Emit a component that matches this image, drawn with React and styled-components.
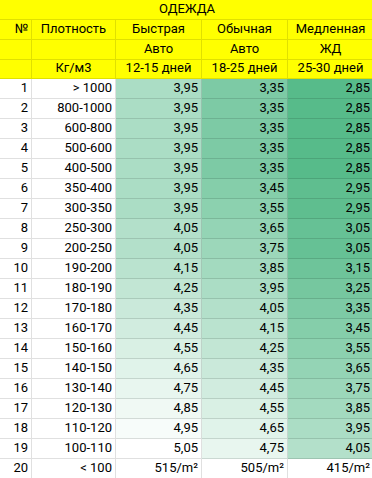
import React from "react";
import styled, { createGlobalStyle } from "styled-components";

const Global = createGlobalStyle`
  html, body { margin: 0; padding: 0; background: #fff; }
  body { font-family: Roboto, "Liberation Sans", Arial, sans-serif; }
  * { box-sizing: border-box; }
`;

const Sheet = styled.div`
  display: grid;
  grid-template-columns: 32px 84px 86px 86px 86px;
  width: 372px;
  overflow: hidden;
  font-size: 13px;
  color: #000;
`;

const MIN = 2.85;
const MAX = 5.05;
const scale = (v) => {
  if (v == null) return "#ffffff";
  const t = Math.max(0, Math.min(1, (v - MIN) / (MAX - MIN)));
  const mix = (a) => Math.round(a + (255 - a) * t);
  return `rgb(${mix(87)}, ${mix(187)}, ${mix(138)})`;
};

const Cell = styled.div`
  height: ${(p) => p.$h || 20}px;
  border-right: 1px solid rgba(0, 0, 0, 0.12);
  border-bottom: 1px solid rgba(0, 0, 0, 0.12);
  background: ${(p) => (p.$head ? "#ffff00" : scale(p.$value))};
  display: flex;
  align-items: flex-end;
  justify-content: ${(p) => (p.$center ? "center" : "flex-end")};
  padding: 0 3px 3px 3px;
  line-height: 15px;
  white-space: nowrap;
`;

const Title = styled(Cell)`
  grid-column: 1 / -1;
  border-right: none;
`;

const rows = [
  [1, "> 1000", 3.95, 3.35, 2.85],
  [2, "800-1000", 3.95, 3.35, 2.85],
  [3, "600-800", 3.95, 3.35, 2.85],
  [4, "500-600", 3.95, 3.35, 2.85],
  [5, "400-500", 3.95, 3.35, 2.85],
  [6, "350-400", 3.95, 3.45, 2.95],
  [7, "300-350", 3.95, 3.55, 2.95],
  [8, "250-300", 4.05, 3.65, 3.05],
  [9, "200-250", 4.05, 3.75, 3.05],
  [10, "190-200", 4.15, 3.85, 3.15],
  [11, "180-190", 4.25, 3.95, 3.25],
  [12, "170-180", 4.35, 4.05, 3.35],
  [13, "160-170", 4.45, 4.15, 3.45],
  [14, "150-160", 4.55, 4.25, 3.55],
  [15, "140-150", 4.65, 4.35, 3.65],
  [16, "130-140", 4.75, 4.45, 3.75],
  [17, "120-130", 4.85, 4.55, 3.85],
  [18, "110-120", 4.95, 4.65, 3.95],
  [19, "100-110", 5.05, 4.75, 4.05],
];

const fmt = (v) => v.toFixed(2).replace(".", ",");

const header = [
  ["№", "Плотность", "Быстрая", "Обычная", "Медленная"],
  ["", "", "Авто", "Авто", "ЖД"],
  ["", "Кг/м3", "12-15 дней", "18-25 дней", "25-30 дней"],
];

export default function App() {
  return (
    <>
      <Global />
      <Sheet>
        <Title $head $center>ОДЕЖДА</Title>
        {header.map((r, ri) =>
          r.map((t, ci) => (
            <Cell
              key={`h${ri}-${ci}`}
              $head
              $center={ci > 0}
              $h={ri === 2 ? 19 : 20}
            >
              {t}
            </Cell>
          ))
        )}
        {rows.map((r) => (
          <React.Fragment key={r[0]}>
            <Cell>{r[0]}</Cell>
            <Cell>{r[1]}</Cell>
            <Cell $value={r[2]}>{fmt(r[2])}</Cell>
            <Cell $value={r[3]}>{fmt(r[3])}</Cell>
            <Cell $value={r[4]}>{fmt(r[4])}</Cell>
          </React.Fragment>
        ))}
        <Cell>20</Cell>
        <Cell>&lt; 100</Cell>
        <Cell>515/m²</Cell>
        <Cell>505/m²</Cell>
        <Cell>415/m²</Cell>
      </Sheet>
    </>
  );
}
